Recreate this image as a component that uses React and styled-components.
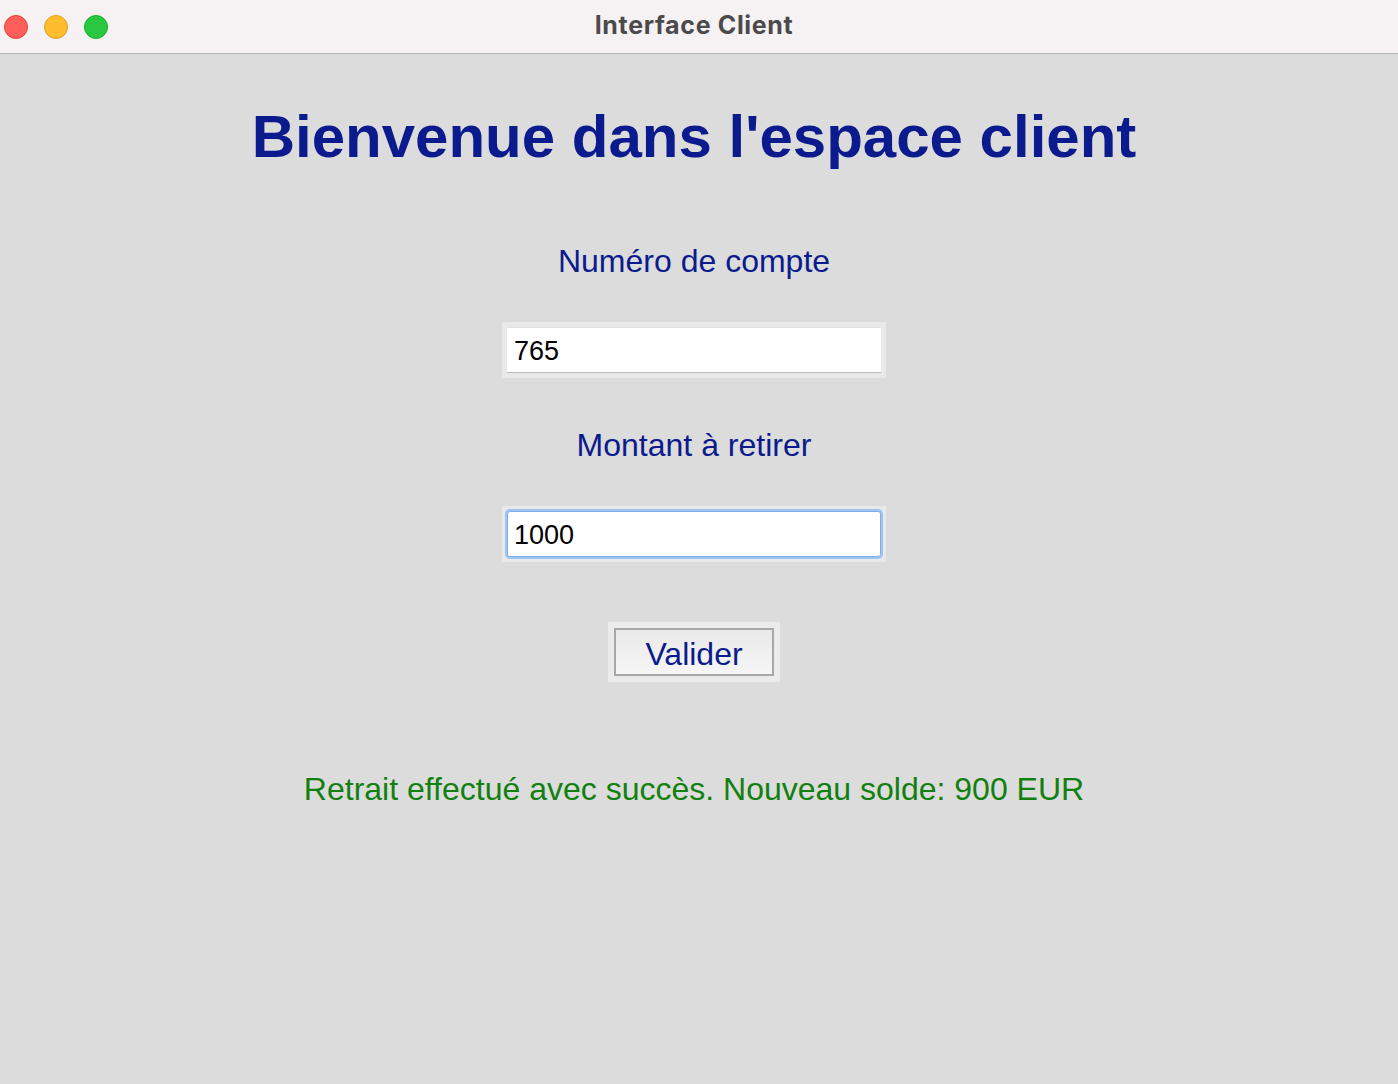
import React, { useState } from 'react';
import styled, { createGlobalStyle } from 'styled-components';

const GlobalStyle = createGlobalStyle`
  html, body {
    margin: 0;
    padding: 0;
    background: #dcdcdc;
  }
  body {
    font-family: "Liberation Sans", Arial, Helvetica, sans-serif;
  }
`;

const Window = styled.div`
  width: 1398px;
  height: 1084px;
  display: flex;
  flex-direction: column;
  background: #dcdcdc;
  overflow: hidden;
`;

const TitleBar = styled.div`
  height: 53px;
  flex: none;
  display: grid;
  grid-template-columns: 1fr auto 1fr;
  align-items: center;
  padding: 0 10px 0 4px;
  background: #f6f1f3;
  border-bottom: 1px solid #b7b5b6;
`;

const Lights = styled.div`
  display: flex;
  gap: 16px;
  align-items: center;
`;

const Light = styled.span`
  width: 24px;
  height: 24px;
  border-radius: 50%;
  box-sizing: border-box;
  background: ${p => p.color};
  border: 1px solid ${p => p.edge};
`;

const WindowTitle = styled.div`
  font-family: Inter, "Liberation Sans", sans-serif;
  font-weight: 700;
  font-size: 25px;
  color: #4b4a4b;
  letter-spacing: 0.65px;
  margin: 0 4px 4px 0;
`;

const Content = styled.main`
  flex: 1;
  display: flex;
  flex-direction: column;
  align-items: center;
  padding: 48px 10px 0 0;
`;

const Heading = styled.h1`
  margin: 0 0 69px;
  font-size: 60px;
  line-height: 70px;
  font-weight: 700;
  color: #0b1a8d;
`;

const Label = styled.label`
  font-size: 32px;
  line-height: 40px;
  color: #0b1a8d;
  margin-bottom: 41px;
`;

const FieldFrame = styled.div`
  padding: 5px;
  background: #e9e9e9;
  margin-bottom: ${p => p.gap}px;
`;

const Input = styled.input`
  display: block;
  box-sizing: border-box;
  width: 374px;
  height: 46px;
  margin: 0;
  padding: 2px 7px 0;
  font-family: "Liberation Sans", Arial, sans-serif;
  font-size: 27px;
  line-height: 44px;
  color: #000;
  background: #fff;
  outline: none;
  border: none;
  border-top: 1px solid #e2e2e2;
  border-bottom: 1px solid #b8b8b8;
  border-radius: 0;

  &.focused {
    border: 1px solid #80b0ea;
    border-radius: 3px;
    box-shadow: 0 0 0 2px #9ec4f3;
    padding-left: 6px;
  }
`;

const ButtonFrame = styled.div`
  padding: 6px;
  background: #ebebeb;
  margin: 0 0 86px;
`;

const Button = styled.button`
  display: block;
  box-sizing: border-box;
  width: 160px;
  height: 48px;
  margin: 0;
  padding: 5px 0 0;
  border: 2px solid #a8a8a8;
  background: linear-gradient(#e9e9e9, #f6f6f6);
  font-family: "Liberation Sans", Arial, sans-serif;
  font-size: 32px;
  line-height: 39px;
  color: #0b1a8d;
  cursor: pointer;
`;

const Message = styled.p`
  margin: 1px 0 0;
  font-size: 32px;
  line-height: 40px;
  color: #11800f;
`;

export default function App() {
  const [account, setAccount] = useState('765');
  const [amount, setAmount] = useState('1000');

  return (
    <>
      <GlobalStyle />
      <Window>
        <TitleBar>
          <Lights>
            <Light color="#fe5f58" edge="#e0443e" />
            <Light color="#febc2e" edge="#dea123" />
            <Light color="#29c840" edge="#1aab29" />
          </Lights>
          <WindowTitle>Interface Client</WindowTitle>
          <span />
        </TitleBar>
        <Content>
          <Heading>Bienvenue dans l'espace client</Heading>
          <Label htmlFor="account">Numéro de compte</Label>
          <FieldFrame gap={47}>
            <Input id="account" value={account} onChange={e => setAccount(e.target.value)} />
          </FieldFrame>
          <Label htmlFor="amount">Montant à retirer</Label>
          <FieldFrame gap={60}>
            <Input
              id="amount"
              className="focused"
              value={amount}
              onChange={e => setAmount(e.target.value)}
            />
          </FieldFrame>
          <ButtonFrame>
            <Button type="button">Valider</Button>
          </ButtonFrame>
          <Message>Retrait effectué avec succès. Nouveau solde: 900 EUR</Message>
        </Content>
      </Window>
    </>
  );
}
